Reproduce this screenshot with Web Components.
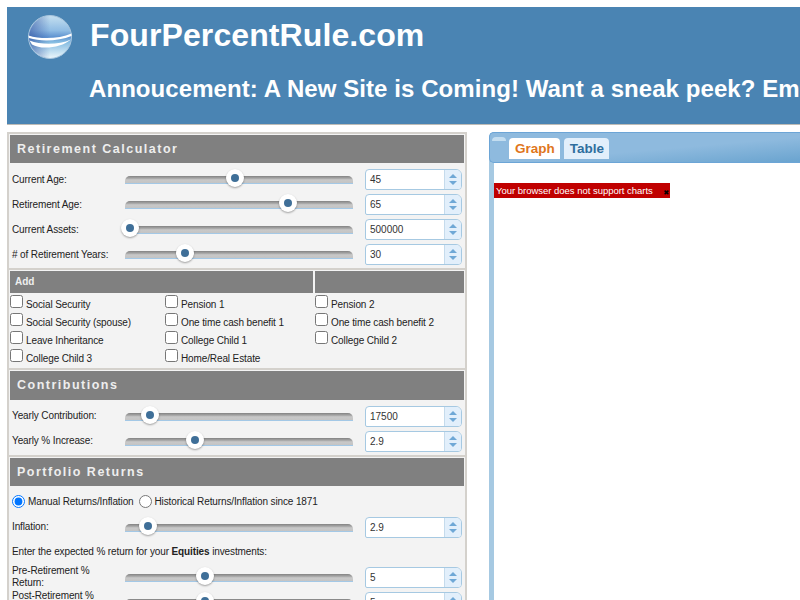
<!DOCTYPE html>
<html>
<head>
<meta charset="utf-8">
<title>FourPercentRule.com</title>
<style>
    html { overflow: hidden; height: 100%; background: #fff; }
    body {
        margin: 7px 0 0 7px;
        width: 1100px;
        font-family: "Liberation Sans", Arial, sans-serif;
        font-size: 10px;
        letter-spacing: -.12px;
        color: #222;
    }
    .main { display: flex; gap: 22px; align-items: flex-start; margin-top: 7px; }
    b { font-weight: bold; }
    .lift { --label-lift: 2px; }
</style>
</head>
<body>
<site-header title-text="FourPercentRule.com">Annoucement: A New Site is Coming! Want a sneak peek? Em</site-header>
<div class="main">
    <calc-panel>
        <calc-section heading="Retirement Calculator">
            <slider-row label="Current Age:" value="45" pos="110"></slider-row>
            <slider-row label="Retirement Age:" value="65" pos="163"></slider-row>
            <slider-row label="Current Assets:" value="500000" pos="5"></slider-row>
            <slider-row label="# of Retirement Years:" value="30" pos="60"></slider-row>
        </calc-section>
        <add-grid></add-grid>
        <calc-section class="lift" heading="Contributions" tall>
            <slider-row label="Yearly Contribution:" value="17500" pos="25"></slider-row>
            <slider-row label="Yearly % Increase:" value="2.9" pos="70"></slider-row>
        </calc-section>
        <calc-section class="lift" heading="Portfolio Returns">
            <radio-row></radio-row>
            <slider-row label="Inflation:" value="2.9" pos="23"></slider-row>
            <note-row>Enter the expected % return for your <b>Equities</b> investments:</note-row>
            <slider-row label="Pre-Retirement % Return:" value="5" pos="80"></slider-row>
            <slider-row label="Post-Retirement % Return:" value="5" pos="80"></slider-row>
        </calc-section>
    </calc-panel>
    <chart-tabs></chart-tabs>
</div>

<script>
class SiteHeader extends HTMLElement {
    connectedCallback() {
        this.attachShadow({ mode: 'open' });
        this.shadowRoot.innerHTML = `
            <style>
                :host {
                    display: block;
                    height: 117px;
                    background: #4a84b3;
                    border-bottom: 1px solid #bdbbb6;
                    color: #fff;
                    overflow: hidden;
                    font-weight: bold;
                    white-space: nowrap;
                }
                .top {
                    display: flex;
                    align-items: flex-start;
                    padding: 7px 0 0 20px;
                    gap: 15px;
                }
                svg { display: block; flex: none; }
                h1 { margin: 3px 0 1px; font-size: 32px; line-height: 37px; font-weight: bold; letter-spacing: .1px; }
                .note { padding: 15px 0 0 82px; font-size: 24px; line-height: 28px; letter-spacing: .07px; }
            </style>
            <div class="top">
                <svg width="48" height="46" viewBox="0 0 48 46">
                    <defs>
                        <linearGradient id="ball" x1="0" y1="0" x2="0" y2="1">
                            <stop offset="0" stop-color="#c6e0f0"/>
                            <stop offset=".35" stop-color="#8fbce4"/>
                            <stop offset=".5" stop-color="#5f93d0"/>
                            <stop offset=".62" stop-color="#86bde2"/>
                            <stop offset="1" stop-color="#eef8fc"/>
                        </linearGradient>
                        <linearGradient id="side" x1="0" y1="0" x2="1" y2="0">
                            <stop offset="0" stop-color="#32509f" stop-opacity=".6"/>
                            <stop offset=".5" stop-color="#32509f" stop-opacity="0"/>
                        </linearGradient>
                    </defs>
                    <circle cx="23" cy="23" r="21.5" fill="url(#ball)" stroke="#a9c6de" stroke-width="1"/>
                    <circle cx="23" cy="23" r="21" fill="url(#side)"/>
                    <path d="M1.500 21.500 C14 25.500 32 25 44.500 19.500 L44.500 22 C32 27 14 28 2 24Z" fill="#fff"/>
                    <path d="M2.500 26.500 C14 31 32 31 44 25.500 C34 34 14 36 5 30.500Z" fill="#fff"/>
                </svg>
                <h1>${this.getAttribute('title-text')}</h1>
            </div>
            <div class="note"><slot></slot></div>
        `;
    }
}

class CalcPanel extends HTMLElement {
    connectedCallback() {
        this.attachShadow({ mode: 'open' });
        this.shadowRoot.innerHTML = `
            <style>
                :host {
                    display: block;
                    flex: none;
                    width: 456px;
                    border: 2px solid #d4d1cc;
                    background: #d4d1cc;
                }
                .inner { display: flex; flex-direction: column; gap: 2px; }
            </style>
            <div class="inner"><slot></slot></div>
        `;
    }
}

class CalcSection extends HTMLElement {
    connectedCallback() {
        const height = this.hasAttribute('tall') ? 29 : 28;
        this.attachShadow({ mode: 'open' });
        this.shadowRoot.innerHTML = `
            <style>
                :host { display: block; background: #f3f3f3; padding: 1px 1px 1px; }
                h2 {
                    margin: 0 0 4px;
                    height: ${height}px;
                    line-height: 28px;
                    padding-left: 7px;
                    background: #808080;
                    color: #eee;
                    font-size: 12.5px;
                    font-weight: bold;
                    letter-spacing: 1.5px;
                }
            </style>
            <h2>${this.getAttribute('heading')}</h2>
            <slot></slot>
        `;
    }
}

class SliderRow extends HTMLElement {
    connectedCallback() {
        this.attachShadow({ mode: 'open' });
        this.shadowRoot.innerHTML = `
            <style>
                :host {
                    display: flex;
                    align-items: center;
                    height: 25px;
                    padding-left: 2px;
                    line-height: 12px;
                }
                .label { flex: none; width: 100px; margin: 0 13px var(--label-lift, 0) 0; }
                .slider { position: relative; flex: none; width: 228px; height: 8px; margin: 1px 12px 0 0; }
                .track {
                    height: 8px;
                    box-sizing: border-box;
                    border-radius: 5px 5px 0 0;
                    border-bottom: 1px solid #a3c8e6;
                    background: linear-gradient(#828282, #a9a9a9 35%, #c8c8c8 55%, #c4c4c4);
                }
                .knob {
                    position: absolute;
                    top: -7px;
                    width: 18px;
                    height: 18px;
                    margin-left: -9px;
                    border-radius: 50%;
                    background: #fff;
                    box-shadow: 0 1px 2px rgba(0,0,0,.35);
                    display: flex;
                    align-items: center;
                    justify-content: center;
                }
                .knob::after {
                    content: "";
                    width: 8px;
                    height: 8px;
                    border-radius: 50%;
                    background: #3f6f98;
                }
                spin-box { flex: none; }
            </style>
            <div class="label">${this.getAttribute('label')}</div>
            <div class="slider">
                <div class="track"></div>
                <div class="knob" style="left:${this.getAttribute('pos')}px"></div>
            </div>
            <spin-box value="${this.getAttribute('value')}"></spin-box>
        `;
    }
}

class SpinBox extends HTMLElement {
    connectedCallback() {
        this.attachShadow({ mode: 'open' });
        this.shadowRoot.innerHTML = `
            <style>
                :host {
                    display: flex;
                    box-sizing: border-box;
                    width: 97px;
                    height: 21px;
                    border: 1px solid #a6c9e2;
                    border-radius: 4px 6px 4px 2px;
                    background: #fff;
                    overflow: hidden;
                }
                .val {
                    flex: 1;
                    padding-left: 4px;
                    line-height: 19px;
                    letter-spacing: 0;
                    color: #333;
                }
                .btns {
                    flex: none;
                    width: 17px;
                    border-left: 1px solid #c5dbec;
                    background: #e2effb;
                    display: flex;
                    flex-direction: column;
                    align-items: center;
                    justify-content: space-around;
                    padding: 3px 0;
                    box-sizing: border-box;
                }
                .up, .down { width: 0; height: 0; border-left: 4px solid transparent; border-right: 4px solid transparent; }
                .up { border-bottom: 4px solid #6fa8d6; }
                .down { border-top: 4px solid #6fa8d6; }
            </style>
            <div class="val">${this.getAttribute('value')}</div>
            <div class="btns"><div class="up"></div><div class="down"></div></div>
        `;
    }
}

class AddGrid extends HTMLElement {
    connectedCallback() {
        const items = [
            'Social Security', 'Pension 1', 'Pension 2',
            'Social Security (spouse)', 'One time cash benefit 1', 'One time cash benefit 2',
            'Leave Inheritance', 'College Child 1', 'College Child 2',
            'College Child 3', 'Home/Real Estate', ''
        ];
        this.attachShadow({ mode: 'open' });
        this.shadowRoot.innerHTML = `
            <style>
                :host { display: block; background: #f3f3f3; padding: 1px 1px 2px; }
                .head { display: grid; grid-template-columns: 303px 149px; gap: 2px; }
                .head div {
                    height: 22px;
                    line-height: 22px;
                    background: #808080;
                    color: #eee;
                    font-weight: bold;
                    letter-spacing: 0;
                    padding-left: 5px;
                }
                .head div:last-child { padding: 0; }
                .grid {
                    display: grid;
                    grid-template-columns: 155px 150px 149px;
                    grid-auto-rows: 18px;
                    margin-top: 1px;
                }
                label { display: flex; align-items: flex-start; height: 18px; }
                label span { margin: 5px 0 0 3px; line-height: 12px; }
                input { margin: 1px 0 0; width: 13px; height: 13px; }
            </style>
            <div class="head"><div>Add</div><div></div></div>
            <div class="grid">
                ${items.map(t => t ? `<label><input type="checkbox"><span>${t}</span></label>` : '<div></div>').join('')}
            </div>
        `;
    }
}

class RadioRow extends HTMLElement {
    connectedCallback() {
        this.attachShadow({ mode: 'open' });
        this.shadowRoot.innerHTML = `
            <style>
                :host { display: flex; align-items: center; box-sizing: border-box; height: 25px; padding: 0 0 2px 2px; }
                label { display: flex; align-items: center; margin-right: 5px; }
                input { margin: 0 3px 0 0; width: 13px; height: 13px; }
            </style>
            <label><input type="radio" name="ret" checked>Manual Returns/Inflation</label>
            <label><input type="radio" name="ret">Historical Returns/Inflation since 1871</label>
        `;
    }
}

class NoteRow extends HTMLElement {
    connectedCallback() {
        this.attachShadow({ mode: 'open' });
        this.shadowRoot.innerHTML = `
            <style>
                :host { display: flex; align-items: center; box-sizing: border-box; height: 25px; padding: 0 0 var(--label-lift, 0) 2px; }
            </style>
            <div><slot></slot></div>
        `;
    }
}

class ChartTabs extends HTMLElement {
    connectedCallback() {
        this.attachShadow({ mode: 'open' });
        this.shadowRoot.innerHTML = `
            <style>
                :host {
                    display: block;
                    flex: none;
                    width: 560px;
                    height: 470px;
                    box-sizing: border-box;
                    border: 1px solid #a6c9e2;
                    border-width: 0 0 0 5px;
                    border-radius: 5px 0 0 0;
                    background: #fff;
                    position: relative;
                    letter-spacing: 0;
                }
                .bar {
                    height: 31px;
                    box-sizing: border-box;
                    margin-left: -5px;
                    padding: 5px 0 0 19px;
                    display: flex;
                    gap: 4px;
                    align-items: flex-start;
                    background: linear-gradient(175deg, #8ebade 40%, #6ca5d0 70%);
                    border: 1px solid #6ca5d6;
                    border-right: 0;
                    border-radius: 5px 0 0 5px;
                    position: relative;
                }
                .bar::before {
                    content: "";
                    position: absolute;
                    left: 2px;
                    top: 4px;
                    width: 14px;
                    height: 4px;
                    background: #c3ddf0;
                    border-radius: 4px 4px 0 0;
                }
                .tab {
                    height: 21px;
                    line-height: 21px;
                    padding: 0 5px 0 6px;
                    font-size: 13.5px;
                    font-weight: bold;
                    border-radius: 4px 4px 0 0;
                }
                .on { background: #fff; color: #e0761c; }
                .off { background: #e2effb; color: #2e6e9e; }
                .msg {
                    margin-top: 20px;
                    width: 176px;
                    height: 15px;
                    box-sizing: border-box;
                    padding-left: 2px;
                    line-height: 15px;
                    background: #c00000;
                    color: #fff;
                    font-size: 9.5px;
                    letter-spacing: -.02px;
                    white-space: nowrap;
                    position: relative;
                }
                .close {
                    position: absolute;
                    right: 1px;
                    top: 3px;
                    color: #000;
                    font-size: 7px;
                    font-family: "DejaVu Sans", sans-serif;
                }
            </style>
            <div class="bar">
                <div class="tab on">Graph</div>
                <div class="tab off">Table</div>
            </div>
            <div class="msg">Your browser does not support charts<span class="close">✖</span></div>
        `;
    }
}

customElements.define('site-header', SiteHeader);
customElements.define('calc-panel', CalcPanel);
customElements.define('calc-section', CalcSection);
customElements.define('slider-row', SliderRow);
customElements.define('spin-box', SpinBox);
customElements.define('add-grid', AddGrid);
customElements.define('radio-row', RadioRow);
customElements.define('note-row', NoteRow);
customElements.define('chart-tabs', ChartTabs);
</script>
</body>
</html>
